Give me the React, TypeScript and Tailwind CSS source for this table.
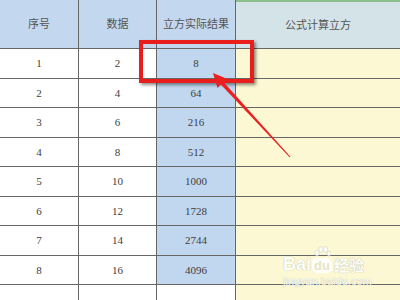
import React from "react";

const rows = [
  [1, 2, 8],
  [2, 4, 64],
  [3, 6, 216],
  [4, 8, 512],
  [5, 10, 1000],
  [6, 12, 1728],
  [7, 14, 2744],
  [8, 16, 4096],
  [null, null, null],
];

const font = { fontFamily: '"Liberation Serif", "Noto Sans CJK SC", serif' };

export default function App() {
  return (
    <div className="relative h-[300px] w-[400px] overflow-hidden bg-white text-[11px] text-[#404040]" style={font}>
      <div className="grid grid-cols-[79px_78px_79px_164px]">
        <div className="flex h-[49px] items-center justify-center border-b border-r border-[#666] bg-[#c3d8ef] text-[#555]">序号</div>
        <div className="flex h-[49px] items-center justify-center border-b border-r border-[#666] bg-[#c3d8ef] text-[#555]">数据</div>
        <div className="flex h-[49px] items-center justify-center border-b border-r border-[#666] bg-[#c3d8ef] text-[#555]">立方实际结果</div>
        <div className="flex h-[49px] items-center justify-center border-b border-t-2 border-[#666] border-t-[#8cbf8c] bg-[#d4e3e7] text-[#555]">公式计算立方</div>

        {rows.map((r, i) => (
          <React.Fragment key={i}>
            <div className="flex h-[29.5px] items-center justify-center border-b border-r border-[#666] bg-white">{r[0]}</div>
            <div className="flex h-[29.5px] items-center justify-center border-b border-r border-[#666] bg-white">{r[1]}</div>
            <div className={`flex h-[29.5px] items-center justify-center border-b border-r border-[#666] ${r[2] ? "bg-[#c0d7ef]" : "bg-white"}`}>{r[2]}</div>
            <div className="h-[29.5px] border-b border-[#666] bg-[#fbf8d3]" />
          </React.Fragment>
        ))}
      </div>

      {/* highlight box */}
      <div className="absolute left-[139px] top-[40px] h-[43px] w-[115px] border-4 border-[#ea1d1d] shadow-[2px_2px_3px_rgba(0,0,0,0.45)]" />

      {/* arrow */}
      <svg className="absolute left-0 top-0" width="400" height="300">
        <polygon
          points="213,73 227.5,79 224,82.6 290.4,156.7 289.6,157.3 220.8,84.6 217.5,88"
          fill="#ec2020"
        />
      </svg>

      {/* watermark */}
      <div className="absolute left-[283px] top-[246px] text-white opacity-90" style={{ fontFamily: '"Liberation Sans", "Noto Sans CJK SC", sans-serif' }}>
        <div className="flex items-end">
          <span className="text-[18px] font-bold leading-none [text-shadow:0_0_1px_#9a9a8a]">Bai</span>
          <div className="relative ml-[1px] flex flex-col items-center">
            <svg width="18" height="12" viewBox="0 0 18 12">
              <ellipse cx="4" cy="7" rx="2.2" ry="2.8" fill="#fff" stroke="#b8b8a8" strokeWidth="0.4" />
              <ellipse cx="8" cy="3.5" rx="2.2" ry="2.8" fill="#fff" stroke="#b8b8a8" strokeWidth="0.4" />
              <ellipse cx="12.5" cy="3.5" rx="2.2" ry="2.8" fill="#fff" stroke="#b8b8a8" strokeWidth="0.4" />
              <ellipse cx="16" cy="7.5" rx="1.8" ry="2.5" fill="#fff" stroke="#b8b8a8" strokeWidth="0.4" />
            </svg>
            <span className="rounded-[5px] bg-white px-[2px] text-[13px] font-bold leading-[15px] text-[#e6e3c4]">du</span>
          </div>
          <span className="ml-[2px] text-[15px] font-bold leading-none [text-shadow:0_0_1px_#9a9a8a]">经验</span>
        </div>
        <div className="mt-[3px] text-[11px] leading-none [text-shadow:0_0_1px_#9a9a8a]">jingyan.baidu.com</div>
      </div>
    </div>
  );
}
